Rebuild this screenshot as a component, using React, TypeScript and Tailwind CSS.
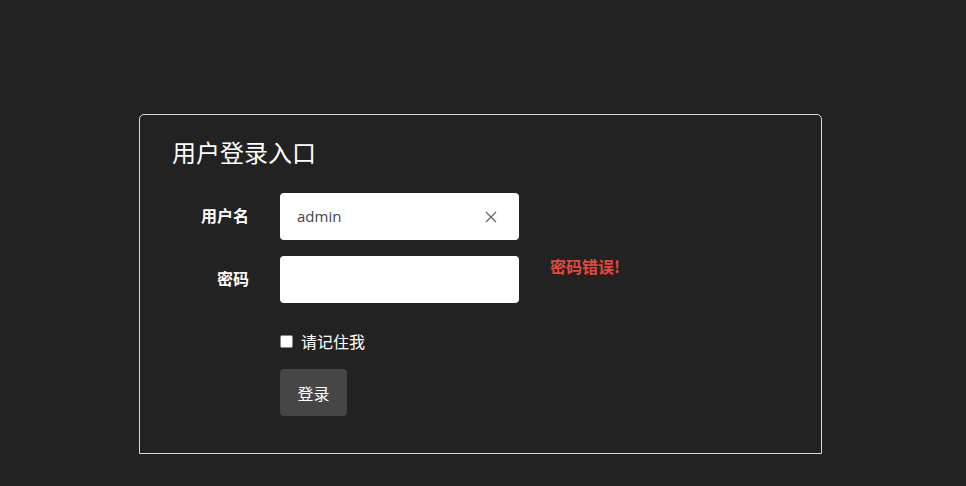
import React from "react";

const font = { fontFamily: '"Noto Sans CJK SC", "Noto Sans", sans-serif' };

export default function App() {
  return (
    <div className="w-full h-[486px] bg-[#222222] overflow-hidden" style={font}>
      <div className="pt-[114px] pl-[139px]">
        <div className="w-[683px] h-[340px] border border-[#d9d9d9] rounded-t-[5px] px-[32px] pt-[21px]">
          <h1 className="text-[24px] leading-[32px] text-white font-normal">用户登录入口</h1>
          <div className="mt-[25px] flex items-center">
            <label className="w-[77px] text-right text-white font-bold text-[16px] leading-[24px] mb-[4px]">用户名</label>
            <div className="ml-[31px] w-[239px] h-[47px] bg-white rounded-[4px] flex items-center pl-[17px] pr-[22px]">
              <span className="flex-1 text-[15px] text-[#444] mb-[1px]" style={{ fontFamily: '"Open Sans", "Noto Sans", sans-serif' }}>admin</span>
              <svg width="12" height="12" viewBox="0 0 12 12" className="text-[#666]">
                <path d="M1 1L11 11M11 1L1 11" stroke="currentColor" strokeWidth="1.2" />
              </svg>
            </div>
          </div>
          <div className="mt-[16px] flex items-start">
            <label className="w-[77px] text-right text-white font-bold text-[16px] leading-[24px] mt-[10px]">密码</label>
            <div className="ml-[31px] w-[239px] h-[47px] bg-white rounded-[4px]" />
            <span className="ml-[31px] -mt-[2px] text-[16px] leading-[24px] font-bold text-[#e5483a]">密码错误!</span>
          </div>
          <div className="mt-[26px] ml-[108px] flex items-center h-[24px]">
            <span className="w-[13px] h-[13px] bg-white border border-[#888] rounded-[2px] inline-block" />
            <span className="ml-[8px] text-white text-[16px] leading-[24px]">请记住我</span>
          </div>
          <div className="mt-[16px] ml-[108px]">
            <button className="w-[67px] h-[47px] bg-[#464646] rounded-[4px] text-white text-[16px]">登录</button>
          </div>
        </div>
      </div>
    </div>
  );
}
